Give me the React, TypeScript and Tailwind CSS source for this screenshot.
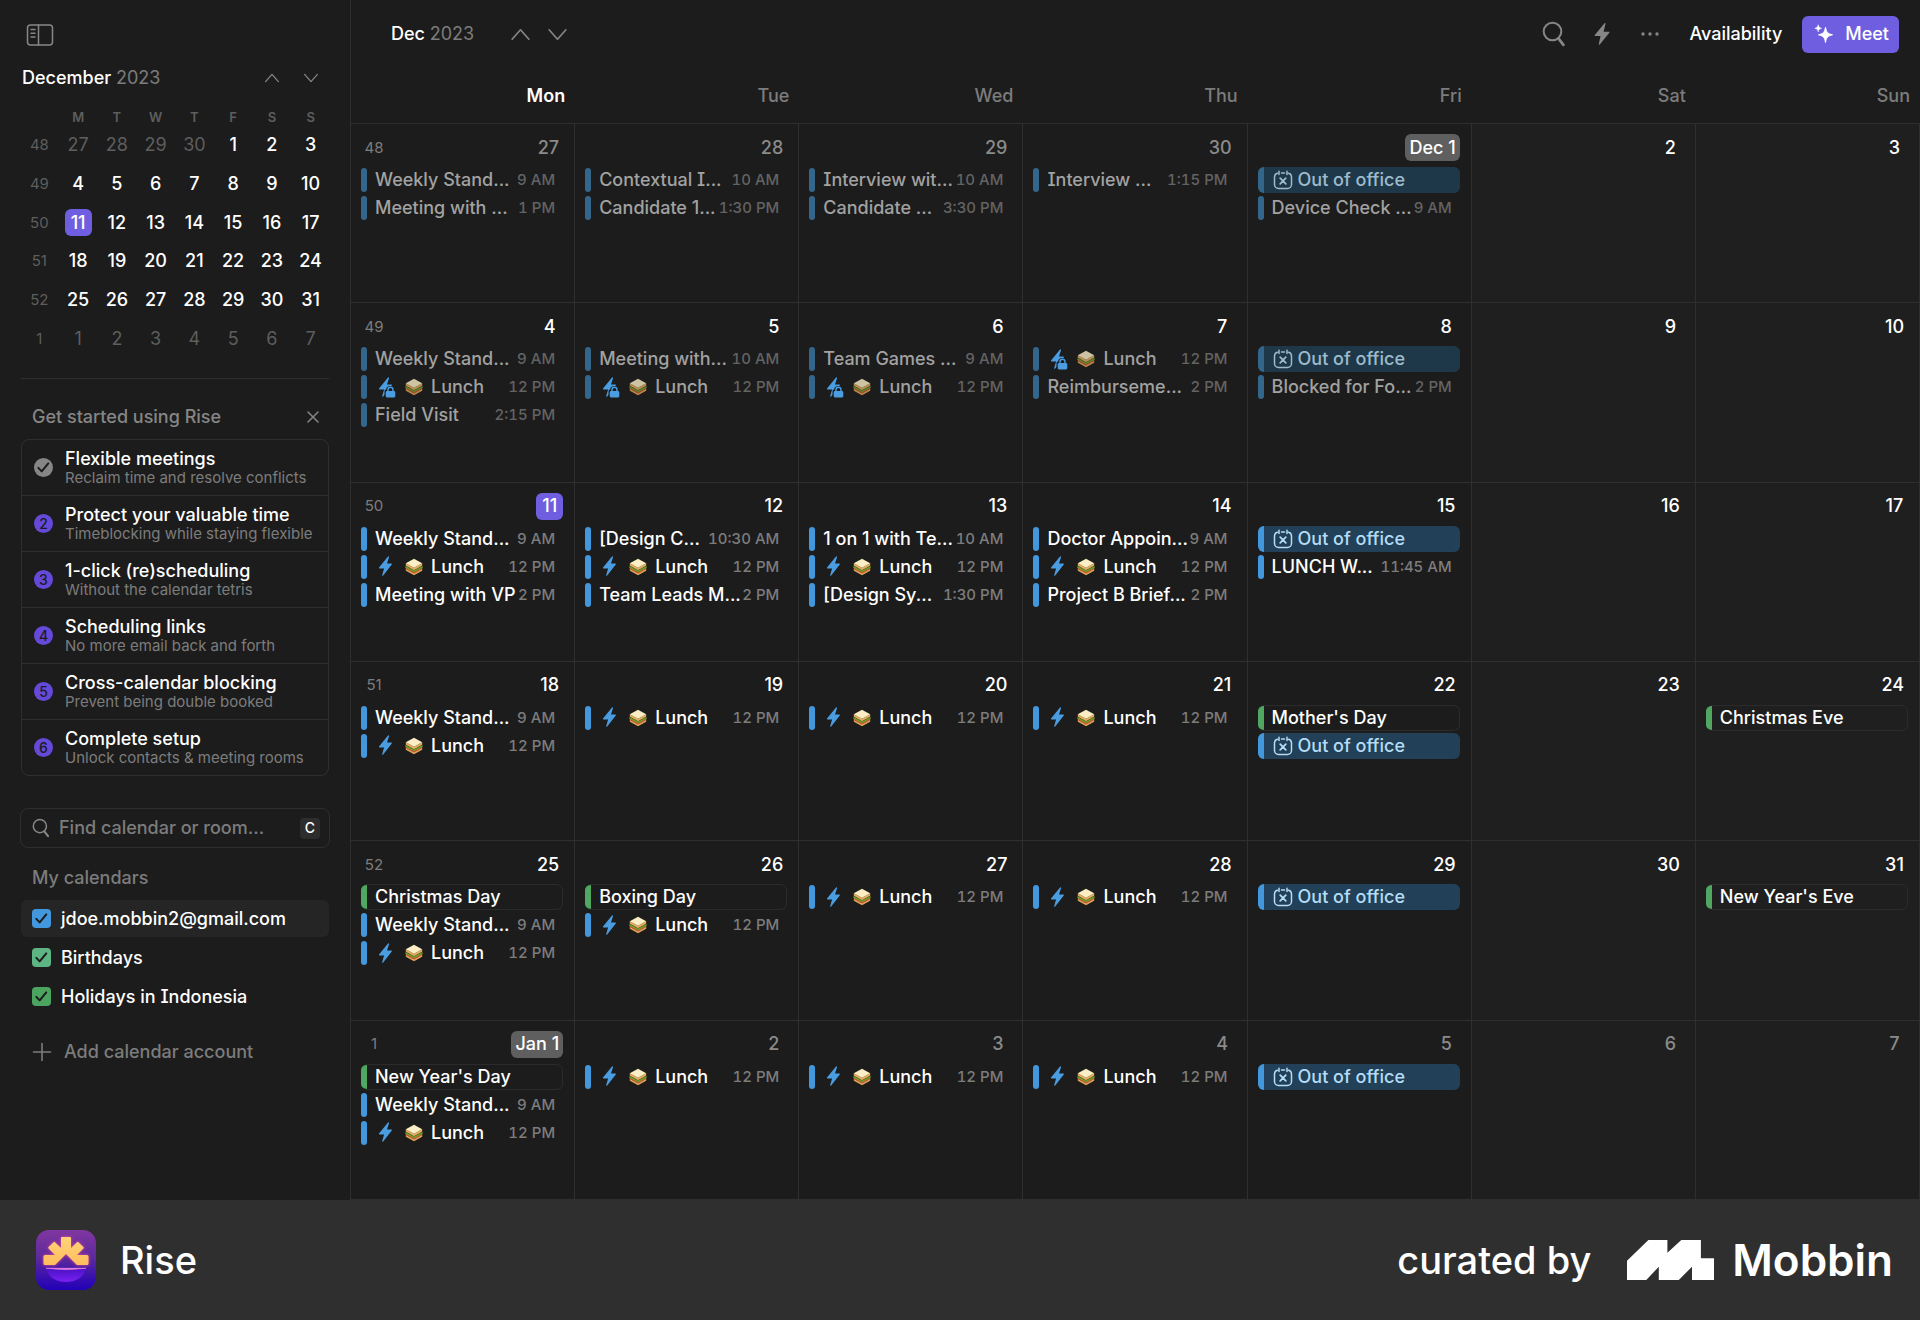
import type { ReactNode } from "react";
import clsx from "clsx";

type EventKind = "event" | "lunch" | "ooo" | "holiday";

interface CalendarEvent {
  kind: EventKind;
  title: string;
  time?: string;
}

interface Day {
  label: string;
  events?: CalendarEvent[];
}

interface Week {
  number: number;
  past?: boolean;
  days: Day[];
}

const ev = (title: string, time: string): CalendarEvent => ({ kind: "event", title, time });
const holiday = (title: string): CalendarEvent => ({ kind: "holiday", title });
const lunch: CalendarEvent = { kind: "lunch", title: "Lunch", time: "12 PM" };
const ooo: CalendarEvent = { kind: "ooo", title: "Out of office" };
const standup = ev("Weekly Stand...", "9 AM");

const weeks: Week[] = [
  {
    number: 48,
    past: true,
    days: [
      { label: "27", events: [standup, ev("Meeting with ...", "1 PM")] },
      { label: "28", events: [ev("Contextual I...", "10 AM"), ev("Candidate 1...", "1:30 PM")] },
      { label: "29", events: [ev("Interview wit...", "10 AM"), ev("Candidate ...", "3:30 PM")] },
      { label: "30", events: [ev("Interview ...", "1:15 PM")] },
      { label: "Dec 1", events: [ooo, ev("Device Check ...", "9 AM")] },
      { label: "2" },
      { label: "3" },
    ],
  },
  {
    number: 49,
    past: true,
    days: [
      { label: "4", events: [standup, lunch, ev("Field Visit", "2:15 PM")] },
      { label: "5", events: [ev("Meeting with...", "10 AM"), lunch] },
      { label: "6", events: [ev("Team Games ...", "9 AM"), lunch] },
      { label: "7", events: [lunch, ev("Reimburseme...", "2 PM")] },
      { label: "8", events: [ooo, ev("Blocked for Fo...", "2 PM")] },
      { label: "9" },
      { label: "10" },
    ],
  },
  {
    number: 50,
    days: [
      { label: "11", events: [standup, lunch, ev("Meeting with VP", "2 PM")] },
      { label: "12", events: [ev("[Design C...", "10:30 AM"), lunch, ev("Team Leads M...", "2 PM")] },
      { label: "13", events: [ev("1 on 1 with Te...", "10 AM"), lunch, ev("[Design Sy...", "1:30 PM")] },
      { label: "14", events: [ev("Doctor Appoin...", "9 AM"), lunch, ev("Project B Brief...", "2 PM")] },
      { label: "15", events: [ooo, ev("LUNCH W...", "11:45 AM")] },
      { label: "16" },
      { label: "17" },
    ],
  },
  {
    number: 51,
    days: [
      { label: "18", events: [standup, lunch] },
      { label: "19", events: [lunch] },
      { label: "20", events: [lunch] },
      { label: "21", events: [lunch] },
      { label: "22", events: [holiday("Mother's Day"), ooo] },
      { label: "23" },
      { label: "24", events: [holiday("Christmas Eve")] },
    ],
  },
  {
    number: 52,
    days: [
      { label: "25", events: [holiday("Christmas Day"), standup, lunch] },
      { label: "26", events: [holiday("Boxing Day"), lunch] },
      { label: "27", events: [lunch] },
      { label: "28", events: [lunch] },
      { label: "29", events: [ooo] },
      { label: "30" },
      { label: "31", events: [holiday("New Year's Eve")] },
    ],
  },
  {
    number: 1,
    days: [
      { label: "Jan 1", events: [holiday("New Year's Day"), standup, lunch] },
      { label: "2", events: [lunch] },
      { label: "3", events: [lunch] },
      { label: "4", events: [lunch] },
      { label: "5", events: [ooo] },
      { label: "6" },
      { label: "7" },
    ],
  },
];

const weekdays = ["Mon", "Tue", "Wed", "Thu", "Fri", "Sat", "Sun"];

const steps = [
  { title: "Flexible meetings", text: "Reclaim time and resolve conflicts" },
  { title: "Protect your valuable time", text: "Timeblocking while staying flexible" },
  { title: "1-click (re)scheduling", text: "Without the calendar tetris" },
  { title: "Scheduling links", text: "No more email back and forth" },
  { title: "Cross-calendar blocking", text: "Prevent being double booked" },
  { title: "Complete setup", text: "Unlock contacts & meeting rooms" },
];

const calendars = [
  { id: "main", name: "jdoe.mobbin2@gmail.com", box: "bg-[#4297dd]", active: true },
  { id: "birthdays", name: "Birthdays", box: "bg-[#5db583]", active: false },
  { id: "holidays", name: "Holidays in Indonesia", box: "bg-[#4ba45f]", active: false },
];

// Days outside the month are dimmed in both calendars
const isOutside = (weekIndex: number, dayIndex: number) =>
  (weekIndex === 0 && dayIndex < 4) || weekIndex === 5;

const Chevron = ({ down, size }: { down?: boolean; size: number }) => (
  <svg width={size} height={size} viewBox="0 0 20 20" fill="none" stroke="currentColor" strokeWidth="1.6" strokeLinecap="round" strokeLinejoin="round">
    <path d={down ? "M2 5.5 10 14.5 18 5.5" : "M2 14.5 10 5.5 18 14.5"} />
  </svg>
);

const SearchIcon = ({ className }: { className?: string }) => (
  <svg className={className} viewBox="0 0 24 26" fill="none" stroke="currentColor" strokeLinecap="round">
    <circle cx="10.5" cy="10.5" r="8.8" strokeWidth="2" />
    <path d="m16.4 17.4 5 6.4" strokeWidth="2.8" />
  </svg>
);

const Bolt = ({ locked }: { locked?: boolean }) => (
  <svg className="h-[21px] w-[17px] shrink-0" viewBox="0 0 17 21" fill="#4a9de0">
    <path d="M9 .5 0 11.6c-.3.5 0 .9.5.9h4.6L3.2 18.9c-.2.7.5 1.1 1 .5l8.6-11c.3-.5.1-.9-.4-.9H8L10 1.2c.2-.8-.5-1.2-1-.7Z" />
    {locked && (
      <>
        <path d="M5.5 21v-6.500q0-1.700 1.700-2.200C7.500 8 15.500 8 15.800 12.300q1.200.500 1.200 2.200V21Z" fill="#1c1c1c" />
        <path d="M9 14.500v-1.800a2.500 2.500 0 0 1 5 0v1.800" fill="none" stroke="#4a9de0" strokeWidth="1.400" />
        <rect x="6.700" y="14" width="9.600" height="6.500" rx="1.400" />
      </>
    )}
  </svg>
);

const Sandwich = ({ faded }: { faded?: boolean }) => (
  <svg className={clsx("h-[18px] w-[18px] shrink-0", faded && "opacity-80")} viewBox="0 0 18 18">
    <path d="M.8 10.5 9 15l8.2-4.500v2.200L9 17.200.8 12.700Z" fill="#dca35a" />
    <path d="M.8 9.200 9 13.700l8.200-4.500v1.900L9 15.600.8 11.100Z" fill="#d2502f" />
    <path d="M.4 8 9 12.600 17.600 8v1.800L9 14.300.4 9.800Z" fill="#6fa52c" />
    <path d="M.8 5.200 9 9.700l8.200-4.500v2.600L9 12.300.8 7.800Z" fill="#e2ad5c" />
    <path d="M9 .8 17.200 5.200 9 9.700.8 5.200Z" fill="#fbedc4" />
  </svg>
);

const OutOfOfficeIcon = () => (
  <svg className="h-5 w-5 shrink-0" viewBox="0 0 20 20" fill="none" stroke="currentColor" strokeWidth="1.5" strokeLinecap="round" strokeLinejoin="round">
    <path d="M4.500 3.200A4 4 0 0 0 1.500 7v7.500a4 4 0 0 0 4 4h9a4 4 0 0 0 4-4V7a4 4 0 0 0-3-3.800M8.500 3h3M6 1.200v3.300M14 1.200v3.300" />
    <path d="m7.200 8.200 5.600 5.600M12.800 8.200l-5.600 5.600" strokeWidth="1.800" />
  </svg>
);

const Check = ({ className }: { className?: string }) => (
  <svg className={className} viewBox="0 0 19 19" fill="none" stroke="#1c1c1c" strokeWidth="2" strokeLinecap="round" strokeLinejoin="round">
    <path d="m4.300 9.900 3.400 3.500 6.600-8" />
  </svg>
);

const IconButton = ({ label, className, children }: { label: string; className?: string; children: ReactNode }) => (
  <button type="button" aria-label={label} className={clsx("flex items-center justify-center text-[#868686]", className)}>
    {children}
  </button>
);

const EventChip = ({ event, past }: { event: CalendarEvent; past?: boolean }) => {
  if (event.kind === "ooo") {
    return (
      <button
        type="button"
        className={clsx(
          "flex h-[26px] w-full items-center overflow-hidden rounded-md",
          past ? "bg-[#1f3849] text-[#9dbbcc]" : "bg-[#224158] text-[#b4dcf6]"
        )}>
        <span className={clsx("h-full w-[6px] shrink-0", past ? "bg-[#34668c]" : "bg-[#4297dd]")} />
        <span className="flex items-center gap-[5px] pl-[9px]">
          <OutOfOfficeIcon />
          {event.title}
        </span>
      </button>
    );
  }

  if (event.kind === "holiday") {
    return (
      <button
        type="button"
        className="flex h-[26px] w-full items-center overflow-hidden rounded-md border border-l-0 border-[#2b2b2b] text-white">
        <span className="h-full w-[6px] shrink-0 bg-[#4fa761]" />
        <span className="pl-2">{event.title}</span>
      </button>
    );
  }

  return (
    <button type="button" className="flex h-[26px] w-full items-center pr-2 whitespace-nowrap">
      <span className={clsx("h-6 w-[6px] shrink-0 rounded-[3px]", past ? "bg-[#34668c]" : "bg-[#4297dd]")} />
      <span className={clsx("flex items-center pl-2", past ? "text-[#a2a2a2]" : "text-white")}>
        {event.kind === "lunch" && (
          <span className="flex items-center gap-[9px] pr-2 pl-1">
            <Bolt locked={past} />
            <Sandwich faded={past} />
          </span>
        )}
        {event.title}
      </span>
      <span className={clsx("ml-auto text-[15px] tabular-nums", past ? "text-[#636363]" : "text-[#7c7c7c]")}>{event.time}</span>
    </button>
  );
};

const DateLabel = ({ label, dim }: { label: string; dim: boolean }) => (
  <span
    className={clsx(
      "flex h-[27px] min-w-[27px] items-center justify-center rounded-md px-1",
      label === "11" && "bg-[#6f5fe0] text-white",
      label.includes(" ") && "bg-[#5f5f5f] text-white",
      label !== "11" && !label.includes(" ") && (dim ? "text-[#8a8a8a]" : "text-white")
    )}>
    {label}
  </span>
);

const MonthGrid = () => (
  <table className="h-full w-full table-fixed border-separate border-spacing-0">
    <thead>
      <tr className="h-14">
        {weekdays.map((day, i) => (
          <th
            key={day}
            scope="col"
            className={clsx(
              "border-b border-[#2f2f2f] pr-[10px] text-right align-middle",
              i === 0 ? "font-semibold text-white" : "font-medium text-[#7c7c7c]"
            )}>
            {day}
          </th>
        ))}
      </tr>
    </thead>
    <tbody>
      {weeks.map((week, w) => (
        <tr key={week.number} className="h-1/6">
          {week.days.map((day, d) => (
            <td
              key={d}
              className={clsx("border-r border-b border-[#2f2f2f] pt-[10px] pr-[11px] pl-[10px] align-top", d > 4 && "bg-[#1f1f1f]")}>
              <div className="mb-[6px] flex items-center">
                {d === 0 && (
                  <span className="min-w-[26px] text-center text-[15px] font-normal text-[#7c7c7c]">{week.number}</span>
                )}
                <div className="ml-auto">
                  <DateLabel label={day.label} dim={isOutside(w, d)} />
                </div>
              </div>
              <div className="flex flex-col gap-[2px]">
                {day.events?.map((event, i) => (
                  <EventChip key={i} event={event} past={week.past} />
                ))}
              </div>
            </td>
          ))}
        </tr>
      ))}
    </tbody>
  </table>
);

const MiniCalendar = () => (
  <table className="mx-5 mt-4 h-[250px] w-[310px] table-fixed border-separate border-spacing-0 text-center">
    <thead>
      <tr className="h-[18px] text-[13px] leading-[18px] text-[#5e5e5e]">
        <td className="p-0" />
        {weekdays.map((day) => (
          <th key={day} scope="col" className="p-0 font-semibold">
            {day[0]}
          </th>
        ))}
      </tr>
    </thead>
    <tbody>
      {weeks.map((week, w) => (
        <tr key={week.number}>
          <th scope="row" className="p-0 text-[15px] font-normal text-[#5e5e5e]">
            {week.number}
          </th>
          {week.days.map((day, d) => {
            const date = day.label.split(" ").pop();
            const today = w === 2 && d === 0;
            return (
              <td key={d} className="p-0">
                <button
                  type="button"
                  className={clsx(
                    "h-[27px] w-[27px] rounded-md",
                    today && "bg-[#6f5fe0]",
                    isOutside(w, d) ? "font-normal text-[#5e5e5e]" : "text-white"
                  )}>
                  {date}
                </button>
              </td>
            );
          })}
        </tr>
      ))}
    </tbody>
  </table>
);

const Sidebar = () => (
  <aside className="w-[351px] shrink-0 border-r border-[#2f2f2f]">
    <IconButton label="Toggle sidebar" className="mt-6 ml-[26px]">
      <svg className="h-[22px] w-7" viewBox="0 0 28 22" fill="none" stroke="currentColor" strokeWidth="1.5" strokeLinecap="round">
        <rect x="1.5" y="1" width="25" height="20" rx="3" />
        <path d="M12.5 1v20M5 5.500h4M5 9.200h4M5 13h4" />
      </svg>
    </IconButton>
    <div className="mt-[18px] flex items-center pr-[31px] pl-[22px]">
      <h2 className="leading-7">
        December <span className="font-normal text-[#7c7c7c]">2023</span>
      </h2>
      <IconButton label="Previous month" className="ml-auto w-4">
        <Chevron size={16} />
      </IconButton>
      <IconButton label="Next month" className="ml-[23px] w-4">
        <Chevron down size={16} />
      </IconButton>
    </div>

    <MiniCalendar />

    <section className="mx-[21px] mt-5 border-t border-[#2f2f2f] pt-6">
      <div className="flex h-7 items-center pr-[10px] pl-[11px]">
        <h3 className="text-[#868686]">Get started using Rise</h3>
        <IconButton label="Dismiss" className="ml-auto">
          <svg className="h-3 w-3" viewBox="0 0 12 12" stroke="currentColor" strokeWidth="1.5" strokeLinecap="round">
            <path d="m1 1 10 10M11 1 1 11" />
          </svg>
        </IconButton>
      </div>
      <ul className="mt-2 divide-y divide-[#2f2f2f] rounded-lg border border-[#2f2f2f]">
        {steps.map((step, i) => (
          <li key={step.title}>
            <button type="button" className="flex h-[55px] w-full items-center pl-3 text-left">
              <span
                className={clsx(
                  "flex h-[19px] w-[19px] shrink-0 items-center justify-center rounded-full text-sm text-[#1c1c1c]",
                  i === 0 ? "bg-[#868686]" : "bg-[#6549da]"
                )}>
                {i === 0 ? <Check className="h-[19px] w-[19px]" /> : i + 1}
              </span>
              <span className="pl-3 whitespace-nowrap">
                <span className="block leading-5">{step.title}</span>
                <span className="block text-[15px] leading-[18px] font-normal text-[#7c7c7c]">{step.text}</span>
              </span>
            </button>
          </li>
        ))}
      </ul>
    </section>

    <label className="mx-5 mt-8 flex h-10 items-center rounded-lg border border-[#2f2f2f] pr-[9px] pl-2">
      <SearchIcon className="ml-[3px] h-5 w-[18px] shrink-0 text-[#868686]" />
      <input
        type="text"
        aria-label="Find calendar or room"
        placeholder="Find calendar or room..."
        className="ml-[9px] min-w-0 flex-1 bg-transparent outline-none placeholder:text-[#7c7c7c]"
      />
      <kbd className="flex h-[21px] w-5 items-center justify-center rounded bg-[#2d2d2d] font-[Inter,sans-serif] text-sm">C</kbd>
    </label>

    <section className="mx-[21px] mt-4">
      <h3 className="pl-[11px] leading-7 text-[#7c7c7c]">My calendars</h3>
      <ul className="mt-2 flex flex-col gap-[2px]">
        {calendars.map((cal) => (
          <li key={cal.id}>
            <label htmlFor={cal.id} className={clsx("flex h-[37px] items-center rounded-md pl-[11px]", cal.active && "bg-[#252525]")}>
              <span className="grid">
                <input id={cal.id} type="checkbox" defaultChecked className={clsx("col-start-1 row-start-1 h-[19px] w-[19px] appearance-none rounded", cal.box)} />
                <Check className="pointer-events-none col-start-1 row-start-1 h-[19px] w-[19px]" />
              </span>
              <span className="pl-[10px]">{cal.name}</span>
            </label>
          </li>
        ))}
      </ul>
      <button type="button" className="mt-[21px] flex h-8 items-center gap-3 pl-[11px] text-[#7c7c7c]">
        <svg className="h-5 w-5" viewBox="0 0 20 20" stroke="currentColor" strokeWidth="1.6" strokeLinecap="round">
          <path d="M10 1.500v17M1.500 10h17" />
        </svg>
        Add calendar account
      </button>
    </section>
  </aside>
);

const Toolbar = () => (
  <header className="flex h-[68px] shrink-0 items-center pr-[21px] pl-10">
    <h1>
      Dec <span className="font-normal text-[#7c7c7c]">2023</span>
    </h1>
    <IconButton label="Previous" className="ml-9">
      <Chevron size={21} />
    </IconButton>
    <IconButton label="Next" className="ml-4">
      <Chevron down size={21} />
    </IconButton>
    <IconButton label="Search" className="ml-auto">
      <SearchIcon className="h-[26px] w-6" />
    </IconButton>
    <IconButton label="Quick actions" className="ml-7">
      <svg className="h-6 w-4" viewBox="0 0 16 24" fill="currentColor">
        <path d="M10.500 1.300.8 13c-.3.500 0 1 .5 1h5.200L4.800 22c-.1.700.6 1 1 .5l9.500-11.800c.3-.5.1-1-.5-1H9.600l1.900-7.900c.2-.7-.6-1-1-.5Z" />
      </svg>
    </IconButton>
    <IconButton label="More" className="ml-[31px]">
      <svg className="h-1 w-[18px]" viewBox="0 0 18 4" fill="currentColor">
        <circle cx="2" cy="2" r="1.7" />
        <circle cx="9" cy="2" r="1.7" />
        <circle cx="16" cy="2" r="1.7" />
      </svg>
    </IconButton>
    <button type="button" className="ml-[30px]">
      Availability
    </button>
    <button type="button" className="ml-5 flex h-[37px] items-center gap-3 rounded-md bg-[#6f5fe0] pr-[10px] pl-3">
      <svg className="h-5 w-[19px]" viewBox="0 0 19 20" fill="currentColor">
        <path d="M11.500 3.200c.9 5 2 6.300 7 7.600-5 1.300-6.100 2.600-7 7.700-.9-5.100-2-6.400-7-7.700 5-1.300 6.100-2.600 7-7.600Z" stroke="currentColor" strokeLinejoin="round" />
        <path d="M4.200.8c.4 2.200 1 2.900 3.300 3.500-2.300.6-2.900 1.300-3.300 3.500C3.800 5.600 3.200 4.900.9 4.300c2.300-.6 2.900-1.300 3.300-3.500Z" stroke="currentColor" strokeWidth=".6" strokeLinejoin="round" />
      </svg>
      Meet
    </button>
  </header>
);

const RiseLogo = () => (
  <svg className="h-[60px] w-[60px]" viewBox="0 0 60 60">
    <defs>
      <linearGradient id="rise-bg" x1="0" y1="0" x2="0" y2="1">
        <stop offset="0" stopColor="#8136a0" />
        <stop offset=".45" stopColor="#5d2a9c" />
        <stop offset="1" stopColor="#2200b8" />
      </linearGradient>
      <linearGradient id="rise-sun" x1="0" y1="0" x2="0" y2="1">
        <stop offset="0" stopColor="#ffd479" />
        <stop offset="1" stopColor="#ffbd5e" />
      </linearGradient>
      <linearGradient id="rise-sea" x1="0" y1="0" x2="0" y2="1">
        <stop offset="0" stopColor="#4a12c4" />
        <stop offset="1" stopColor="#7a20f5" />
      </linearGradient>
      <filter id="rise-glow" x="-20%" y="-20%" width="140%" height="140%">
        <feGaussianBlur stdDeviation="1.5" />
      </filter>
      <path
        id="rise-rays"
        d="M26 7h8a1 1 0 0 1 1 1v10l6-5.800a1 1 0 0 1 1.400 0l5 4.800a1 1 0 0 1 0 1.500L41 25h10a1.500 1.500 0 0 1 1.500 1.500v7A1.500 1.500 0 0 1 51 35H41L30 24 19 35H9a1.500 1.500 0 0 1-1.500-1.500v-7A1.500 1.500 0 0 1 9 25h10l-6.400-6.500a1 1 0 0 1 0-1.500l5-4.800a1 1 0 0 1 1.400 0l6 5.800V8a1 1 0 0 1 1-1Z"
      />
    </defs>
    <rect width="60" height="60" rx="13" fill="url(#rise-bg)" />
    <use href="#rise-rays" fill="#f0508c" filter="url(#rise-glow)" />
    <use href="#rise-rays" fill="url(#rise-sun)" />
    <path d="M10 38.500h40C48 47 40 52 30 52s-18-5-20-13.500Z" fill="url(#rise-sea)" />
    <path d="M10 38.300h40q-20 2.600-40 0Z" fill="#ff9ee0" stroke="#ee7fe0" strokeWidth=".6" />
  </svg>
);

const Footer = () => (
  <footer className="flex h-[120px] shrink-0 items-center bg-[#2f2f2f] pr-[27px] pl-9 text-[38px]">
    <RiseLogo />
    <span className="ml-6">Rise</span>
    <span className="ml-auto">curated by</span>
    <svg className="ml-9 h-10 w-[87px]" viewBox="0 0 87 40" fill="#fff">
      <path d="M0 20.700 21.400 0h19v12.700L54.300 0h19.600v18.300H87V40H65V26.700L51.800 40h-20V26.700L19.300 40H0Z" />
    </svg>
    <span className="ml-[18px] text-[44px] font-semibold">Mobbin</span>
  </footer>
);

export default function App() {
  return (
    <div className="flex h-screen flex-col bg-[#1c1c1c] font-[Inter,sans-serif] text-lg leading-6 font-medium text-white [font-feature-settings:'cv08']">
      <div className="flex min-h-0 flex-1">
        <Sidebar />
        <main className="flex min-w-0 flex-1 flex-col">
          <Toolbar />
          <div className="min-h-0 flex-1">
            <MonthGrid />
          </div>
        </main>
      </div>
      <Footer />
    </div>
  );
}
